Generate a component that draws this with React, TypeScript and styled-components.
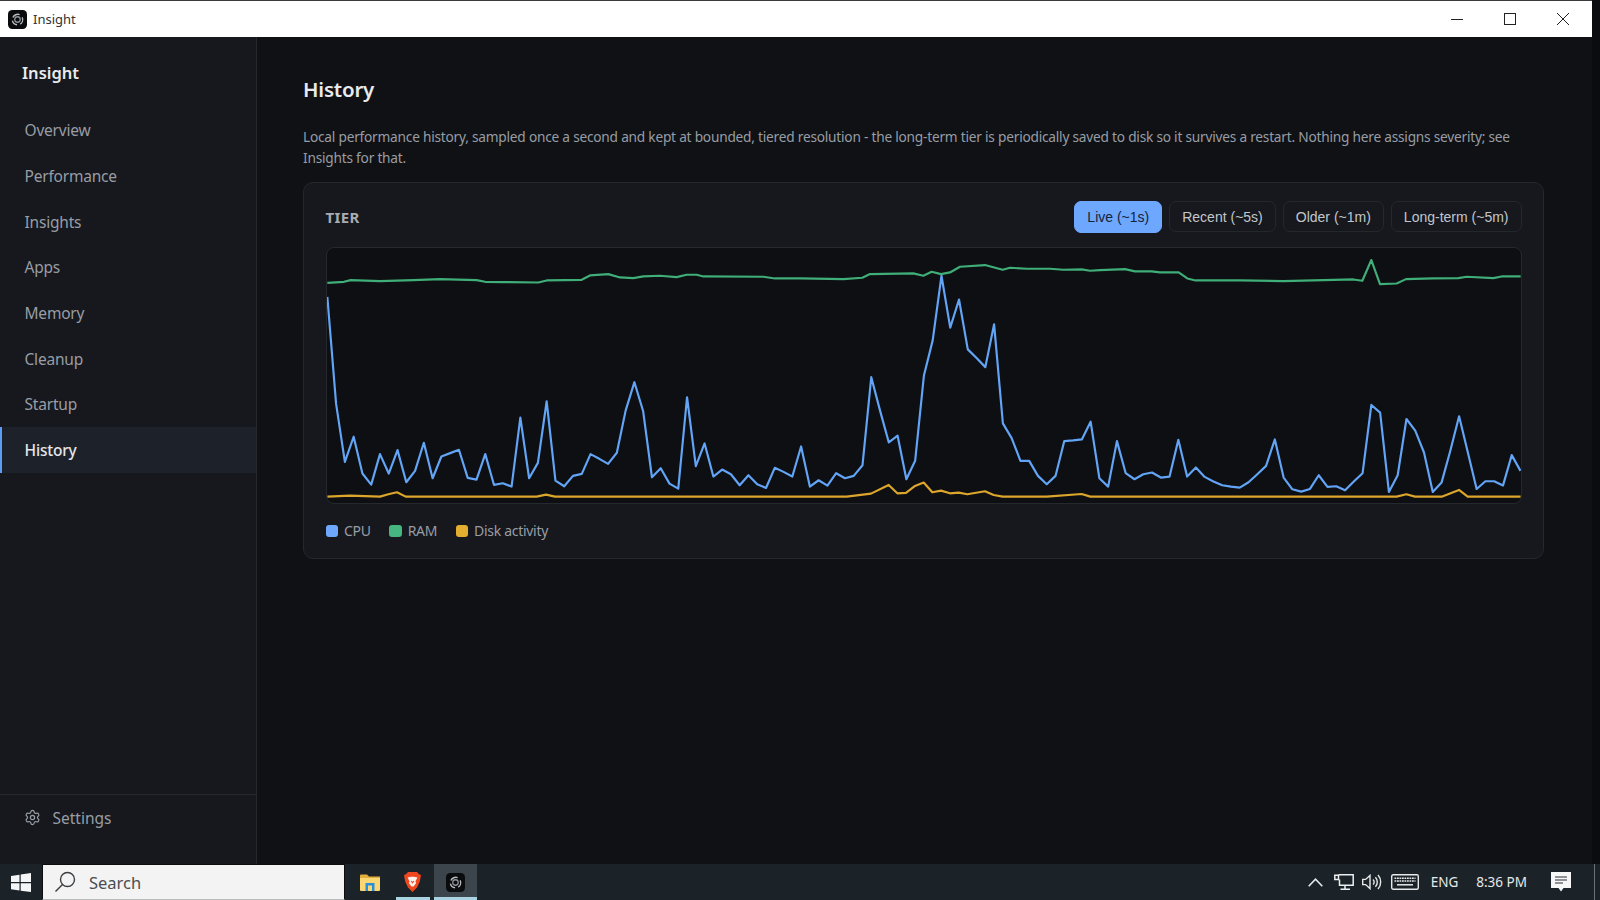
import styled, { createGlobalStyle } from 'styled-components';
import { Settings } from 'lucide-react';

const NAV_ITEMS = ['Overview', 'Performance', 'Insights', 'Apps', 'Memory', 'Cleanup', 'Startup', 'History'];
const TIERS = ['Live (~1s)', 'Recent (~5s)', 'Older (~1m)', 'Long-term (~5m)'];

// chart samples are kept at 3x pixel scale
const CPU = [
  170, 490, 663, 588, 698, 731, 640, 698, 628, 724, 690, 606, 712, 647, 637, 627, 711, 716, 640, 732, 727, 737, 531,
  712, 666, 482, 719, 736, 705, 699, 640, 654, 669, 636, 510, 425, 512, 709, 682, 728, 743, 470, 676, 608, 707, 686,
  700, 733, 703, 730, 741, 681, 693, 707, 617, 737, 718, 734, 697, 712, 705, 673, 410, 510, 605, 585, 715, 660, 405,
  300, 107, 262, 178, 327, 353, 380, 252, 548, 592, 660, 660, 705, 730, 705, 601, 599, 596, 543, 712, 737, 601, 697,
  715, 700, 695, 710, 707, 597, 707, 680, 708, 722, 733, 737, 740, 724, 700, 675, 596, 710, 745, 752, 744, 703, 738,
  736, 748, 722, 697, 493, 516, 753, 703, 535, 570, 635, 753, 725, 630, 527, 635, 744, 721, 721, 734, 643, 690,
];
const CPU_POINTS = CPU.map((y, i) => `${82 + i * 26.32},${y}`).join(' ');
const RAM_POINTS =
  '82,128 132,125 152,120 240,123 340,120 420,117 530,120 555,125 610,126 715,127 740,121 845,119 870,106 925,102 960,112 1000,114 1030,109 1080,107 1130,111 1160,104 1190,104 1210,109 1390,110 1425,115 1500,115 1630,117 1687,113 1710,102 1840,100 1870,107 1895,95 1923,102 1950,97 1980,80 2055,75 2108,89 2130,83 2180,86 2250,86 2290,89 2345,88 2370,92 2400,90 2475,87 2505,94 2555,94 2580,97 2636,97 2662,115 2687,121 2820,121 2950,123 3160,118 3187,122 3214,60 3240,132 3290,130 3318,117 3400,115 3475,114 3500,110 3580,114 3605,109 3662,109';
const DISK_POINTS =
  '82,767 150,764 240,767 265,760 291,754 317,767 710,767 738,761 765,767 1640,767 1713,758 1766,732 1792,757 1818,756 1845,735 1871,725 1897,754 1923,749 1950,757 1976,755 2002,760 2055,751 2081,762 2108,767 2240,767 2345,759 2371,767 3290,767 3319,760 3345,767 3425,767 3477,747 3503,767 3662,767';

const LEGEND = [
  { label: 'CPU', color: '#6ea8fe' },
  { label: 'RAM', color: '#46b57f' },
  { label: 'Disk activity', color: '#e3ae2f' },
];

const AppIcon = ({ size }: { size: number }) => (
  <svg width={size} height={size} viewBox="0 0 18 18">
    <rect width="18" height="18" rx="4" fill="#0a0b0d" />
    <path d="M4.6 7.2A5 5 0 0 1 11 4.4M13.4 7A5 5 0 0 1 11.6 13.4M8.6 14A5 5 0 0 1 4.2 10" fill="none" stroke="#b8bbc0" strokeWidth="1.3" />
    <circle cx="9" cy="9" r="2.6" fill="none" stroke="#8e9299" strokeWidth="1.2" />
  </svg>
);

const App = () => {
  return (
    <>
      <GlobalStyle />
      <Screen>
        <Window>
          <TitleBar>
            <TitleLabel>
              <AppIcon size={19} />
              <span>Insight</span>
            </TitleLabel>
            <WindowControls>
              <ControlIcon viewBox="0 0 12 12">
                <path d="M0 6.5H12" />
              </ControlIcon>
              <ControlIcon viewBox="0 0 12 12">
                <rect x="0.5" y="0.5" width="11" height="11" />
              </ControlIcon>
              <ControlIcon viewBox="0 0 12 12">
                <path d="M0 0L12 12M12 0L0 12" />
              </ControlIcon>
            </WindowControls>
          </TitleBar>
          <Body>
            <Sidebar>
              <Brand>Insight</Brand>
              <Nav>
                {NAV_ITEMS.map((item) => (
                  <NavItem key={item} $active={item === 'History'}>
                    {item}
                  </NavItem>
                ))}
              </Nav>
              <SettingsRow>
                <Settings size={17} strokeWidth={1.7} />
                <span>Settings</span>
              </SettingsRow>
            </Sidebar>
            <Content>
              <Heading>History</Heading>
              <Description>
                Local performance history, sampled once a second and kept at bounded, tiered resolution - the long-term
                tier is periodically saved to disk so it survives a restart. Nothing here assigns severity; see Insights
                for that.
              </Description>
              <Card>
                <CardHeader>
                  <CardTitle>TIER</CardTitle>
                  <TierGroup>
                    {TIERS.map((tier, i) => (
                      <TierButton key={tier} $active={i === 0}>
                        {tier}
                      </TierButton>
                    ))}
                  </TierGroup>
                </CardHeader>
                <Plot>
                  <svg viewBox="81 24 3582 762" preserveAspectRatio="none">
                    <ChartLine points={RAM_POINTS} stroke="#3fae78" />
                    <ChartLine points={CPU_POINTS} stroke="#62a4f6" />
                    <ChartLine points={DISK_POINTS} stroke="#dca52c" />
                  </svg>
                </Plot>
                <Legend>
                  {LEGEND.map((entry) => (
                    <LegendItem key={entry.label}>
                      <Swatch $color={entry.color} />
                      {entry.label}
                    </LegendItem>
                  ))}
                </Legend>
              </Card>
            </Content>
          </Body>
        </Window>
        <Taskbar>
          <StartButton>
            <svg width="20" height="19" viewBox="0 0 20 19" fill="#f4f6f7">
              <path d="M0 3L8.5 1.7V9H0ZM9.7 1.5L20 0V9H9.7ZM0 10.3H8.5V17.5L0 16.2ZM9.7 10.3H20V19L9.7 17.7Z" />
            </svg>
          </StartButton>
          <SearchBox>
            <svg width="24" height="24" viewBox="0 0 24 24" fill="none" stroke="#3c3f42" strokeWidth="1.4">
              <circle cx="14.5" cy="9.5" r="7" />
              <path d="M9.5 14.5L2.5 21.5" />
            </svg>
            <span>Search</span>
          </SearchBox>
          <TaskCell>
            <svg width="20" height="17" viewBox="0 0 20 17">
              <path d="M0 1.5A1 1 0 0 1 1 .5H7L9 2.5H20V5H0Z" fill="#e3ae3c" />
              <path d="M0 4H20V16A1 1 0 0 1 19 17H1A1 1 0 0 1 0 16Z" fill="#fad772" />
              <path d="M5.5 9H14.5V17H12V11.5H8V17H5.5Z" fill="#2a8fd8" />
            </svg>
          </TaskCell>
          <TaskCell $running>
            <svg width="17" height="20" viewBox="0 0 17 20">
              <path d="M4 0H13L15 2.2L17 3L15.8 9.5L13 15.6L8.5 20L4 15.6L1.2 9.5L0 3L2 2.2Z" fill="#f0471f" />
              <path d="M3.6 5.6L7 4.8H10L13.4 5.6L11.4 9.6L12.2 11L9.6 14.6H7.4L4.8 11L5.6 9.6Z" fill="#fdf2ec" />
              <path d="M7.2 9L8.5 10.8L9.8 9" fill="none" stroke="#f0471f" strokeWidth="1.1" />
            </svg>
          </TaskCell>
          <TaskCell $running $active>
            <AppIcon size={19} />
          </TaskCell>
          <Tray>
            <TrayIcons>
              <Chevron width="15" height="9" viewBox="0 0 15 9" fill="none" stroke="#e6e8e9" strokeWidth="1.6">
                <path d="M.7 8.3L7.5 1.2L14.3 8.3" />
              </Chevron>
              <svg width="20" height="16" viewBox="0 0 20 16" fill="none" stroke="#eceeef" strokeWidth="1.5">
                <path d="M4.5.8H19.2V11.3H5.5V5.5" />
                <path d="M.8 1.2H4.5V5.5H.8ZM11 11.5V14.8M6.5 15.2H16" />
              </svg>
              <svg width="21" height="16" viewBox="0 0 21 16" fill="none" stroke="#e6e8e9" strokeWidth="1.4">
                <path d="M.7 5.4H3.6L8 1.4V14.6L3.6 10.6H.7Z" />
                <path d="M11 5.4A3.5 3.5 0 0 1 11 10.6M13.4 3.2A7 7 0 0 1 13.4 12.8M16 1A10.5 10.5 0 0 1 16 15" />
              </svg>
              <svg width="28" height="16" viewBox="0 0 28 16" fill="none" stroke="#e6e8e9">
                <rect x=".7" y=".7" width="26.6" height="14.6" rx="1.5" strokeWidth="1.4" />
                <path d="M3.5 4.2H24.5M3.5 7H24.5" strokeWidth="1.4" strokeDasharray="1.8 .7" />
                <path d="M6 10.8H22" strokeWidth="1.5" />
              </svg>
            </TrayIcons>
            <TrayLang>ENG</TrayLang>
            <TrayClock>8:36 PM</TrayClock>
            <Notification>
              <svg width="20" height="20" viewBox="0 0 20 20">
                <path d="M0 0H20V16H12.5L10 19.5L7.5 16H0Z" fill="#f6f7f7" />
                <path d="M4 5H16M4 8H16M4 11H12" stroke="#2a3136" strokeWidth="1.1" />
              </svg>
            </Notification>
            <ShowDesktop />
          </Tray>
        </Taskbar>
      </Screen>
    </>
  );
};

export default App;

const GlobalStyle = createGlobalStyle`
  html, body {
    margin: 0;
    height: 100%;
    background: #0a0c0f;
  }

  * {
    box-sizing: border-box;
  }
`;

const Screen = styled.div`
  width: 1600px;
  height: 900px;
  display: flex;
  flex-direction: column;
  overflow: hidden;
  background: #0a0c0f;
  font-family: 'Noto Sans', 'Open Sans', sans-serif;
`;

const Window = styled.div`
  flex: 1;
  min-height: 0;
  margin-right: 8px;
  display: flex;
  flex-direction: column;
`;

const TitleBar = styled.div`
  height: 37px;
  flex: none;
  display: flex;
  align-items: center;
  justify-content: space-between;
  padding: 0 23px 0 8px;
  background: #fff;
  border-top: 1px solid #3a3a3a;
  color: #333;
`;

const TitleLabel = styled.div`
  display: flex;
  align-items: center;
  gap: 6px;
  font-size: 13px;
`;

const WindowControls = styled.div`
  display: flex;
  align-items: center;
  gap: 41px;
`;

const ControlIcon = styled.svg`
  width: 12px;
  height: 12px;
  fill: none;
  stroke: #222;
  stroke-width: 1;
`;

const Body = styled.div`
  flex: 1;
  min-height: 0;
  display: flex;
`;

const Sidebar = styled.aside`
  width: 257px;
  flex: none;
  display: flex;
  flex-direction: column;
  background: #16181d;
  border-right: 1px solid #25282d;
`;

const Brand = styled.div`
  height: 70.3px;
  padding: 22.5px 0 0 22px;
  font-size: 16.5px;
  line-height: 25px;
  font-weight: 600;
  color: #e8eaed;
`;

const Nav = styled.nav`
  display: flex;
  flex-direction: column;
`;

const NavItem = styled.div<{ $active?: boolean }>`
  height: 45.7px;
  display: flex;
  align-items: center;
  padding-left: 22.5px;
  font-size: 15.5px;
  letter-spacing: -0.2px;
  font-weight: ${(p) => (p.$active ? 500 : 400)};
  color: ${(p) => (p.$active ? '#e3e6ea' : '#989da5')};
  background: ${(p) => (p.$active ? '#1d222a' : 'transparent')};
  border-left: 2px solid ${(p) => (p.$active ? '#5b9df5' : 'transparent')};
`;

const SettingsRow = styled.div`
  margin-top: auto;
  height: 70px;
  display: flex;
  align-items: flex-start;
  gap: 12px;
  padding: 10.5px 0 0 23.5px;
  line-height: 24px;
  border-top: 1px solid #25282d;
  font-size: 15.5px;
  color: #989da5;

  svg {
    margin-top: 3.5px;
  }
`;

const Content = styled.main`
  flex: 1;
  min-width: 0;
  padding: 37px 48px 0 46px;
  background: #0f1114;
`;

const Heading = styled.h1`
  margin: 0 0 22px;
  font-size: 20.5px;
  letter-spacing: -0.2px;
  line-height: 30px;
  font-weight: 600;
  color: #e8eaed;
`;

const Description = styled.p`
  margin: 0 0 14px;
  font-size: 13.7px;
  letter-spacing: -0.225px;
  line-height: 21px;
  color: #989da5;
`;

const Card = styled.section`
  height: 377px;
  padding: 18px 21.5px 0;
  background: #16181d;
  border: 1px solid #24272c;
  border-radius: 10px;
`;

const CardHeader = styled.div`
  height: 46px;
  display: flex;
  justify-content: space-between;
  align-items: flex-start;
`;

const CardTitle = styled.div`
  margin-top: 5px;
  font-size: 15px;
  line-height: 22px;
  font-weight: 700;
  letter-spacing: 0.4px;
  color: #a8acb2;
`;

const TierGroup = styled.div`
  display: flex;
  gap: 7px;
`;

const TierButton = styled.button<{ $active?: boolean }>`
  height: ${(p) => (p.$active ? 32 : 31)}px;
  padding: 0 12px;
  font-family: 'Liberation Sans', Arial, sans-serif;
  font-size: 14px;
  color: ${(p) => (p.$active ? '#14233a' : '#c2c6cc')};
  background: ${(p) => (p.$active ? '#6ea8fe' : '#16181d')};
  border: 1px solid ${(p) => (p.$active ? '#6ea8fe' : '#24272c')};
  border-radius: 7px;
`;

const Plot = styled.div`
  height: 257px;
  overflow: hidden;
  background: #0e0f12;
  border: 1px solid #25282d;
  border-radius: 8px;

  svg {
    display: block;
    width: 100%;
    height: 100%;
  }
`;

const ChartLine = styled.polyline`
  fill: none;
  stroke-width: 6.5;
  stroke-linejoin: round;
`;

const Legend = styled.div`
  margin-top: 17px;
  display: flex;
  gap: 18.5px;
`;

const LegendItem = styled.div`
  display: flex;
  align-items: center;
  gap: 6px;
  font-size: 14px;
  letter-spacing: -0.3px;
  line-height: 20px;
  color: #989da5;
`;

const Swatch = styled.span<{ $color: string }>`
  width: 12.5px;
  height: 12.5px;
  border-radius: 3px;
  background: ${(p) => p.$color};
`;

const Taskbar = styled.footer`
  height: 36px;
  flex: none;
  display: flex;
  background: #1b2328;
`;

const StartButton = styled.div`
  width: 42px;
  display: flex;
  align-items: center;
  justify-content: center;
`;

const SearchBox = styled.div`
  width: 303px;
  margin-right: 3px;
  display: flex;
  align-items: center;
  gap: 12px;
  padding-left: 10px;
  background: #f3f3f3;
  border: 1px solid #0b0d0f;
  border-bottom-color: #b9bcbd;
  color: #4a4d50;
  font-size: 16.5px;
`;

const TaskCell = styled.div<{ $running?: boolean; $active?: boolean }>`
  position: relative;
  width: 43px;
  display: flex;
  align-items: center;
  justify-content: center;
  background: ${(p) => (p.$active ? '#3c454b' : 'transparent')};

  &::after {
    content: '';
    display: ${(p) => (p.$running ? 'block' : 'none')};
    position: absolute;
    left: ${(p) => (p.$active ? 0 : 5)}px;
    right: ${(p) => (p.$active ? 0 : 4)}px;
    bottom: 0;
    height: 3px;
    background: #a9d3e0;
  }
`;

const Tray = styled.div`
  margin-left: auto;
  display: flex;
  align-items: center;
  color: #e6e8e9;
  font-size: 13.5px;
`;

const TrayIcons = styled.div`
  display: flex;
  align-items: center;
  gap: 8px;
`;

const Chevron = styled.svg`
  margin-right: 3px;
`;

const TrayLang = styled.div`
  margin-left: 12px;
`;

const TrayClock = styled.div`
  margin-left: 18px;
`;

const Notification = styled.div`
  margin: 0 23px 0 24px;
  display: flex;
`;

const ShowDesktop = styled.div`
  width: 1px;
  height: 100%;
  margin-right: 5px;
  background: #6b7175;
`;
